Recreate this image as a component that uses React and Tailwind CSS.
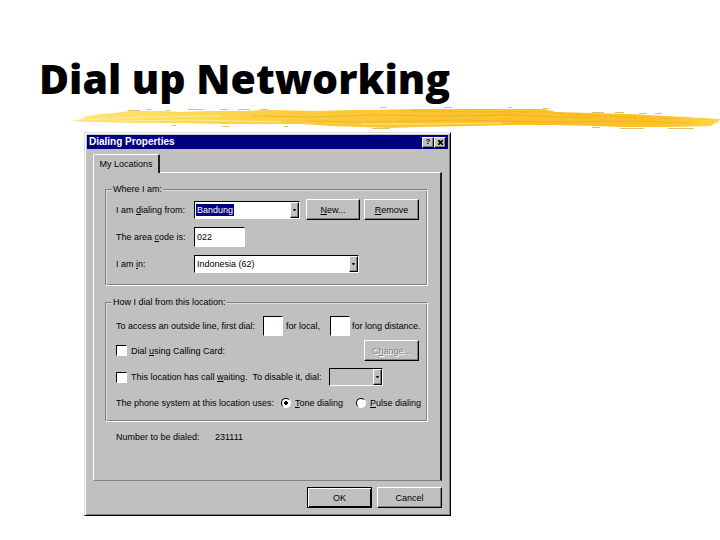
import React from "react";

const raised = "border border-t-white border-l-white border-r-black border-b-black shadow-[inset_-1px_-1px_0_#808080]";
const sunken = "border border-t-black border-l-black border-r-white border-b-white bg-white";

function BrushStroke() {
    return (
        <svg viewBox="0 0 648 26" preserveAspectRatio="none" className="mt-0.5 block h-[26px] w-[90%] ml-auto" aria-hidden="true">
            <defs>
                <linearGradient id="brush" x1="0" x2="1" y1="0" y2="0">
                    <stop offset="0" stopColor="#ffe680" />
                    <stop offset="0.15" stopColor="#ffdb58" />
                    <stop offset="0.35" stopColor="#fccb3c" />
                    <stop offset="0.65" stopColor="#fbc02a" />
                    <stop offset="0.9" stopColor="#ffc12b" />
                    <stop offset="1" stopColor="#ffd44a" />
                </linearGradient>
            </defs>
            <path
                fill="url(#brush)"
                d="M0 16 L14 13 L10 12 L28 9 L42 8 L58 6 L90 6 L110 7 L135 6 L170 6 L200 5 L245 6 L280 5 L300 5 L340 4 L380 4 L420 4 L472 4 L484 7 L520 8 L556 9 L596 11 L632 13 L648 14 L646 17 L638 21 L600 22 L550 22 L520 21 L480 20 L440 20 L400 21 L345 22 L318 23 L290 22 L258 21 L230 19 L190 19 L150 19 L110 18 L60 18 L26 17 L16 17 Z"
            />
            <g fill="none" stroke="#e5a51c" strokeOpacity="0.5">
                <path d="M180 11 L240 12 L300 10 L370 11 L440 10 L520 13" />
                <path d="M230 16 L300 17 L390 15 L470 17 L560 16 L620 18" />
                <path d="M340 6 L400 7 L470 7 L550 12 L610 14" strokeDasharray="9 3 4 2" />
            </g>
            <g fill="none" stroke="#fff0a8" strokeOpacity="0.8">
                <path d="M12 15 L70 12 L150 11" />
                <path d="M50 16 L120 15 L210 17" />
                <path d="M290 19 L360 19 L430 18" />
            </g>
            <g fill="none" stroke="#e0c070" shapeRendering="crispEdges">
                <path d="M56 5 H68 M74 4 H80 M94 5 H98 M116 4 H132 M148 4 H156 M166 4 H178" />
                <path d="M188 4 H196 M308 2 H314 M372 2 H380 M436 2 H440 M471 3 H477 M520 7 H532 M543 7 H552 M567 8 H575 M583 8 H590" />
                <path d="M100 20 H104 M150 21 H158 M212 21 H216 M300 23 H318 M520 22 H528 M548 23 H572 M596 23 H622" />
            </g>
        </svg>
    );
}

function DropDown({ className, selectClass = "", ...props }) {
    return (
        <div className={`relative flex h-[18px] ${sunken} ${className}`}>
            <select className={`w-full appearance-none pl-0.5 pr-3 outline-none ${selectClass}`} {...props} />
            <span className={`pointer-events-none absolute inset-y-0 right-0 flex w-[9px] items-center justify-center bg-[#c0c0c0] ${raised}`}>
                <svg viewBox="0 0 3 2" className="h-[2px] w-[3px]" fill="#000">
                    <path d="M0 0 H3 L2 2 H1 Z" />
                </svg>
            </span>
        </div>
    );
}

function Group({ title, className, children }) {
    return (
        <fieldset className={`border border-t-[#808080] border-l-[#808080] border-r-white border-b-white pl-2.5 shadow-[inset_1px_1px_0_#dcdcdc,inset_-1px_-1px_0_#808080] ${className}`}>
            <legend className="-ml-1 bg-[#c0c0c0] px-px leading-3">{title}</legend>
            {children}
        </fieldset>
    );
}

function Button({ className = "", children, ...props }) {
    return (
        <button className={`h-[21px] shrink-0 bg-[#c0c0c0] text-center ${raised} ${className}`} {...props}>
            {children}
        </button>
    );
}

const radioClass =
    "size-[10px] shrink-0 appearance-none rounded-full border border-t-black border-l-black border-r-white border-b-white bg-white checked:bg-[radial-gradient(circle,#000_2px,#fff_2px)]";
const checkClass = `size-[11px] shrink-0 appearance-none ${sunken}`;

export default function App() {
    return (
        <main className="min-h-screen bg-white pt-[53px] font-['Liberation_Sans',Arial,sans-serif] text-black">
            <h1 className="pl-[39px] font-['Open_Sans','Arial_Black',sans-serif] text-[41px] font-extrabold leading-[50px] whitespace-nowrap">
                Dial up Networking
            </h1>
            <BrushStroke />

            <section
                aria-labelledby="dialog-title"
                className="mt-px ml-[84px] w-full max-w-[367px] border border-t-[#dcdcdc] border-l-[#dcdcdc] border-r-black border-b-black bg-[#c0c0c0] p-0.5 pb-[7px] text-[9px] leading-3 whitespace-nowrap shadow-[inset_1px_1px_0_#fff,inset_-1px_-1px_0_#808080]"
            >
                <header className="flex h-[14px] items-center bg-[#000080] px-0.5 text-white">
                    <h2 id="dialog-title" className="flex-1 text-[10px] font-bold">Dialing Properties</h2>
                    <button aria-label="Help" className={`flex h-[11px] w-3 items-center justify-center bg-[#c0c0c0] text-[8px] font-bold leading-none text-black ${raised}`}>
                        ?
                    </button>
                    <button aria-label="Close" className={`flex h-[11px] w-3 items-center justify-center bg-[#c0c0c0] ${raised}`}>
                        <svg viewBox="0 0 6 6" className="size-[5px]" stroke="#000" strokeWidth="2">
                            <path d="M0 0 L6 6 M6 0 L0 6" />
                        </svg>
                    </button>
                </header>

                <div className="px-1.5 pt-[5px]">
                    <div role="tablist" className="flex">
                        <button
                            role="tab"
                            aria-selected="true"
                            className="relative z-10 -mb-px h-[19px] w-[67px] rounded-t-xs border-t border-l border-r-2 border-t-white border-l-white border-r-[#202020] bg-[#c0c0c0] text-center"
                        >
                            My Locations
                        </button>
                    </div>

                    <div role="tabpanel" className="h-[309px] border border-r-2 border-t-white border-l-white border-r-[#202020] border-b-[#808080] pt-2.5 pr-3 pl-[11px]">
                        <Group title="Where I am:" className="h-[103px] pr-2">
                            <div className="mt-1 flex h-[21px] items-center">
                                <label htmlFor="from" className="w-[78px]">I am <u>d</u>ialing from:</label>
                                <DropDown
                                    id="from"
                                    className="mr-1.5 flex-1"
                                    selectClass="bg-[linear-gradient(#000080,#000080)] bg-[length:38px_12px] bg-[position:1px_2px] bg-no-repeat text-white"
                                >
                                    <option>Bandung</option>
                                </DropDown>
                                <Button className="mr-1 w-[54px]"><u>N</u>ew...</Button>
                                <Button className="w-[55px]"><u>R</u>emove</Button>
                            </div>
                            <div className="mt-[7px] flex items-center">
                                <label htmlFor="area" className="w-[78px]">The area <u>c</u>ode is:</label>
                                <input id="area" defaultValue="022" className={`h-5 w-[51px] px-0.5 outline-none ${sunken}`} />
                            </div>
                            <div className="mt-2 flex items-center">
                                <label htmlFor="country" className="w-[78px]">I am <u>i</u>n:</label>
                                <DropDown id="country" className="w-[165px]">
                                    <option>Indonesia (62)</option>
                                </DropDown>
                            </div>
                        </Group>

                        <Group title="How I dial from this location:" className="mt-2.5 h-[126px]">
                            <div className="mt-2 flex h-5 items-center">
                                <label htmlFor="local" className="w-[147px]">To access an outside line, first dial:</label>
                                <input id="local" className={`h-5 w-5 ${sunken}`} />
                                <label htmlFor="local" className="w-[47px] pl-[3px]">for local,</label>
                                <input id="long" className={`h-5 w-5 ${sunken}`} />
                                <label htmlFor="long" className="pl-0.5">for long distance.</label>
                            </div>
                            <div className="mt-1 flex items-center pr-2">
                                <label className="flex flex-1 items-center gap-1">
                                    <input type="checkbox" className={checkClass} />
                                    <span>Dial <u>u</u>sing Calling Card:</span>
                                </label>
                                <Button disabled className="w-[55px] text-[#808080] [text-shadow:1px_1px_0_#fff]">C<u>h</u>ange...</Button>
                            </div>
                            <div className="mt-[7px] flex items-center">
                                <label className="flex w-[213px] items-center gap-1">
                                    <input type="checkbox" className={checkClass} />
                                    <span>This location has call <u>w</u>aiting. &nbsp;To disable it, dial:</span>
                                </label>
                                <DropDown aria-label="Call waiting code" disabled className="w-[54px] !bg-[#c0c0c0]" />
                            </div>
                            <div className="mt-[11px] flex items-center">
                                <span className="w-[165px]">The phone system at this location uses:</span>
                                <label className="flex w-[75px] items-center gap-1">
                                    <input type="radio" name="system" defaultChecked className={radioClass} />
                                    <span><u>T</u>one dialing</span>
                                </label>
                                <label className="flex items-center gap-1">
                                    <input type="radio" name="system" className={radioClass} />
                                    <span><u>P</u>ulse dialing</span>
                                </label>
                            </div>
                        </Group>

                        <p className="mt-[9px] flex pl-[11px]">
                            <span className="w-[99px]">Number to be dialed:</span>
                            <span>231111</span>
                        </p>
                    </div>

                    <footer className="mt-1.5 flex justify-end gap-[5px]">
                        <button className="h-[21px] w-[65px] border border-black bg-[#c0c0c0] text-center shadow-[inset_1px_1px_0_#fff,inset_-1px_-1px_0_#000]">OK</button>
                        <Button className="w-[65px]">Cancel</Button>
                    </footer>
                </div>
            </section>
        </main>
    );
}
